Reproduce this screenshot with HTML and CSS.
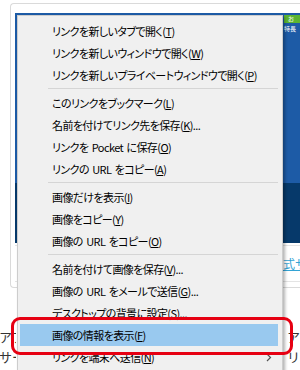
FILE: index.html
```html
<!DOCTYPE html>
<html lang="ja">
  <head>
    <meta charset="UTF-8" />
    <meta name="viewport" content="width=device-width, initial-scale=1.0" />
    <title>コンテキストメニュー</title>
    <link rel="stylesheet" href="styles.css">
  </head>
  <body>
    <div class="page">
      <div class="frame">
        <div class="hero">
          <div class="hero-top">
            <div class="hero-cta">
              <span class="cta-btn">お</span>
              <span class="cta-note">特長</span>
            </div>
          </div>
          <div class="hero-bottom"></div>
        </div>
        <div class="frame-foot">
          <a class="foot-link" href="#">式サ</a>
        </div>
      </div>
      <div class="page-text">
        <span class="col-left">アプ</span>
        <span class="col-right">ア</span>
        <span class="col-left">サー</span>
        <span class="col-right">リ</span>
      </div>
    </div>

    <div class="menu">
      <div class="item">リンクを新しいタブで開く(<u>T</u>)</div>
      <div class="item">リンクを新しいウィンドウで開く(<u>W</u>)</div>
      <div class="item">リンクを新しいプライベートウィンドウで開く(<u>P</u>)</div>
      <div class="sep"></div>
      <div class="item">このリンクをブックマーク(<u>L</u>)</div>
      <div class="item">名前を付けてリンク先を保存(<u>K</u>)...</div>
      <div class="item">リンクを Pocket に保存(<u>O</u>)</div>
      <div class="item">リンクの URL をコピー(<u>A</u>)</div>
      <div class="sep"></div>
      <div class="item">画像だけを表示(<u>I</u>)</div>
      <div class="item">画像をコピー(<u>Y</u>)</div>
      <div class="item">画像の URL をコピー(<u>O</u>)</div>
      <div class="sep"></div>
      <div class="item">名前を付けて画像を保存(<u>V</u>)...</div>
      <div class="item">画像の URL をメールで送信(<u>G</u>)...</div>
      <div class="item">デスクトップの背景に設定(<u>S</u>)...</div>
      <div class="item active">画像の情報を表示(<u>F</u>)</div>
      <div class="item has-sub">
        <span>リンクを端末へ送信(<u>N</u>)</span>
        <svg class="chevron" width="6" height="9" viewBox="0 0 6 9">
          <polyline points="1,1 4.5,4.5 1,8" fill="none" stroke="#555" stroke-width="1.2" />
        </svg>
      </div>
    </div>

    <div class="callout"></div>
  </body>
</html>
```

FILE: styles.css
```css
body {
  margin: 0;
  width: 300px;
  height: 370px;
  overflow: hidden;
  position: relative;
  background-color: #fff;
  font-family: "Noto Sans CJK JP", "Noto Sans", sans-serif;
}
.page {
  padding: 3px 0 0 10px;
}
.frame {
  height: 274px;
  padding: 9px 0 0 4px;
  border: 1px solid #dadada;
  border-right: none;
  border-radius: 4px 0 0 4px;
  overflow: hidden;
}
.hero-top {
  height: 170px;
  background-color: #1d5ba6;
  display: flex;
  justify-content: flex-end;
}
.hero-bottom {
  height: 60px;
  background-color: #06396a;
}
.hero-cta {
  width: 16px;
  padding-top: 2px;
  display: flex;
  flex-direction: column;
  gap: 2px;
}
.cta-btn {
  height: 8px;
  background-color: #5cb531;
  color: #fff;
  font-size: 6px;
  line-height: 8px;
  padding-left: 4px;
}
.cta-note {
  color: #fff;
  font-size: 6px;
  line-height: 8px;
}
.frame-foot {
  margin-top: 2px;
  height: 35px;
  border-top: 1px solid #e4e4e4;
  border-bottom: 1px solid #e4e4e4;
  display: flex;
  justify-content: flex-end;
  align-items: center;
  white-space: nowrap;
}
.foot-link {
  width: 17px;
  overflow: hidden;
  font-size: 12px;
  color: #33a3d4;
}
.page-text {
  margin-left: -11px;
  margin-top: 39px;
  display: grid;
  grid-template-columns: 17px 13px;
  column-gap: 271px;
  font-size: 13px;
  line-height: 20px;
  color: #333;
  white-space: nowrap;
}
.col-left,
.col-right {
  overflow: hidden;
}
.menu {
  position: absolute;
  left: 17px;
  top: 15px;
  width: 266px;
  height: 370px;
  box-sizing: border-box;
  padding: 4px 4px 0 2px;
  background-color: #f0f0f0;
  border: 1px solid #cdcdcd;
  box-shadow: 2px 2px 3px rgba(0, 0, 0, 0.3);
  font-size: 11px;
  letter-spacing: -0.6px;
  word-spacing: 1.5px;
  font-feature-settings: "palt";
  color: #000;
}
.item {
  height: 22px;
  line-height: 22px;
  padding-left: 32px;
  white-space: nowrap;
}
.item u {
  text-underline-offset: 1px;
}
.item.active {
  background-color: #99c9ef;
}
.item.has-sub {
  display: flex;
  align-items: center;
  justify-content: space-between;
  padding-right: 6px;
}
.sep {
  height: 6px;
  margin-left: 28px;
  box-sizing: border-box;
  padding-top: 2px;
}
.sep::before {
  content: "";
  display: block;
  height: 1px;
  background-color: #d5d5d5;
}
.callout {
  position: absolute;
  left: 11px;
  top: 317px;
  width: 282px;
  height: 38px;
  box-sizing: border-box;
  border: 3px solid #e60012;
  border-radius: 9px;
}
```
